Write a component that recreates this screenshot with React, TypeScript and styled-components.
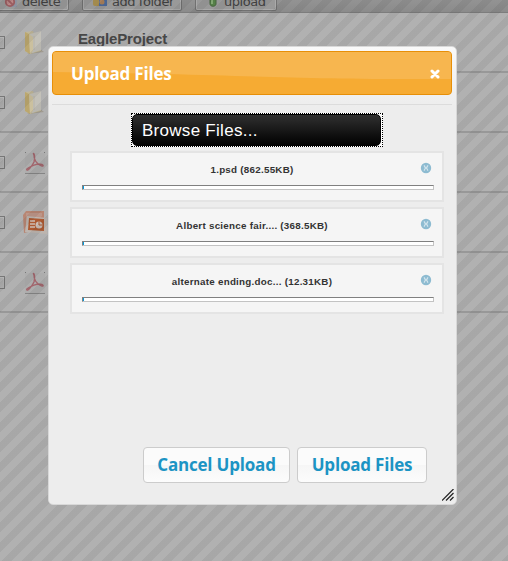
import React from "react";
import styled, { createGlobalStyle } from "styled-components";

const Global = createGlobalStyle`
  html, body { margin: 0; height: 100%; overflow: hidden; }
  * { box-sizing: border-box; }
  body { font-family: "Liberation Sans", Arial, sans-serif; background: #b0b0b0; }
  button { font: inherit; margin: 0; }
`;

const Page = styled.div`
  position: relative;
  width: 508px;
  height: 561px;
  overflow: hidden;
  background: #b1b1b1;
`;

const Toolbar = styled.div`
  display: flex;
  align-items: flex-start;
  gap: 13px;
  height: 13px;
  background: linear-gradient(#939393, #8b8b8b);
  border-bottom: 1px solid #7d7d7d;
`;

const ToolButton = styled.div<{ $width: number }>`
  display: flex;
  align-items: center;
  gap: 4px;
  flex: none;
  width: ${(p) => p.$width}px;
  height: 22px;
  margin-top: -11px;
  padding: 3px 0 0 10px;
  border: 1px solid #717171;
  border-radius: 2px;
  box-shadow: inset 0 0 0 1px #aaa;
  background: #999;
  color: #414141;
  font: 13px/17px "DejaVu Sans", Verdana, sans-serif;
  letter-spacing: -0.45px;
  white-space: nowrap;
  &:first-child { margin-left: -8px; padding-left: 11px; }
`;

const FileRow = styled.div`
  display: flex;
  align-items: center;
  height: 60px;
  border-bottom: 2px solid #989898;
`;

const Check = styled.span`
  flex: none;
  width: 13px;
  height: 13px;
  margin-left: -8px;
  border: 1px solid #777;
  background: linear-gradient(135deg, #999, #b5b5b5);
  box-shadow: inset 0 0 0 1px #b3b3b3;
`;

const FileIcon = styled.span`
  display: flex;
  justify-content: center;
  flex: none;
  margin: 2px 0 0 17px;
  width: 26px;
  svg { display: block; flex: none; }
`;

const FileTitle = styled.span`
  margin: -7px 0 0 30px;
  color: #484848;
  font-weight: bold;
  font-size: 15px;
  line-height: 18px;
  letter-spacing: -0.15px;
`;

const Overlay = styled.div`
  position: absolute;
  inset: 0;
  background: repeating-linear-gradient(
    135deg,
    transparent 0 1.77px,
    rgba(0, 0, 0, 0.055) 1.77px 8.84px,
    transparent 8.84px 14.142px
  );
`;

const Dialog = styled.section`
  position: absolute;
  left: 48px;
  top: 46px;
  width: 409px;
  height: 459px;
  padding: 4px 4px 0 3px;
  border: 1px solid #d8d8d8;
  border-radius: 5px;
  background: linear-gradient(#f9f9f9, #ededed 60px);
  display: flex;
  flex-direction: column;
`;

const TitleBar = styled.header`
  position: relative;
  display: flex;
  align-items: center;
  justify-content: space-between;
  flex: none;
  height: 44px;
  padding: 0 11px 0 18px;
  border: 1px solid #e78f08;
  border-radius: 4px;
  background: #f6ab33;
  overflow: hidden;
`;

const Gloss = styled.svg`
  position: absolute;
  left: 0;
  top: 0;
`;

const Title = styled.h1`
  position: relative;
  margin: 0;
  padding-top: 1px;
  color: #fff;
  font: 700 17px/22px "Open Sans", "Trebuchet MS", sans-serif;
  letter-spacing: -0.2px;
`;

const CloseIcon = styled.svg`
  position: relative;
  display: block;
  margin-top: 1px;
`;

const Content = styled.div`
  flex: 1;
  margin-top: 9px;
  border-top: 1px solid #dcdcdc;
  padding: 8px 9px 0 18px;
  display: flex;
  flex-direction: column;
`;

const BrowseFocus = styled.div`
  align-self: flex-start;
  flex: none;
  width: 252px;
  height: 34px;
  margin-left: 61px;
  border: 1px dotted #000;
  background: #fff;
`;

const Browse = styled.button`
  display: block;
  width: 249px;
  height: 32px;
  padding: 2px 0 0 9px;
  border: 1px solid #000;
  border-radius: 5px;
  background: linear-gradient(#303030, #000);
  color: #fff;
  font-size: 17px;
  line-height: 28px;
  letter-spacing: 0.28px;
  text-align: left;
`;

const Queue = styled.div`
  display: flex;
  flex-direction: column;
  gap: 5px;
  margin-top: 4px;
`;

const QueueItem = styled.div`
  flex: none;
  width: 374px;
  height: 51px;
  padding: 9px 10px 0 10px;
  border: 2px solid #e4e4e4;
  background: #f5f5f5;
`;

const ItemHead = styled.div`
  display: grid;
  grid-template-columns: 1fr 12px;
  height: 23px;
`;

const ItemName = styled.div`
  padding: 1px 0 0 2px;
  text-align: center;
  color: #333;
  font-weight: bold;
  font-size: 9.8px;
  line-height: 13px;
  letter-spacing: 0.26px;
`;

const Track = styled.div`
  width: 352px;
  height: 5px;
  border: 1px solid #c3c3c3;
  border-top-color: #808080;
  border-left-color: #808080;
  background: #fff;
`;

const Bar = styled.div`
  width: 1px;
  height: 3px;
  background: #0099dd;
`;

const Footer = styled.footer`
  display: flex;
  gap: 7px;
  padding: 0 0 0 91px;
  height: 57px;
`;

const Action = styled.button<{ $width: number }>`
  width: ${(p) => p.$width}px;
  height: 36px;
  padding: 0;
  border: 1px solid #ccc;
  border-radius: 4px;
  background: linear-gradient(#fbfbfb 0 50%, #f6f6f6 50%, #fcfcfc);
  color: #1c94c4;
  font: 700 17px/34px "Open Sans", "Trebuchet MS", sans-serif;
  letter-spacing: -0.2px;
  white-space: nowrap;
`;

const Grip = styled.svg`
  position: absolute;
  right: 2px;
  bottom: 3px;
`;

const FolderIcon = () => (
  <svg width="22" height="26" viewBox="0 0 22 26">
    <path d="M3 24 L20 22 L15 18 Z" fill="#999080" opacity=".7" />
    <path d="M1 2 L9 1 L10 4 L17 2 V21 L6 24 L1 21 Z" fill="#c0b797" />
    <path d="M6 4 L17 1 V20 L8 23 Z" fill="#c3c1b9" />
    <path d="M1 2 L5 4 L6 24 L1 21 Z" fill="#bba76e" />
    <path d="M5 4 L9 7 V21 L6 24 Z" fill="#cbc09e" />
    <path d="M10 6 V20" stroke="#b7b4aa" />
  </svg>
);

const PdfIcon = () => (
  <svg width="22" height="23" viewBox="1 0 22 23">
    <rect x="2" y="1" width="20" height="21" fill="#adadad" />
    <path d="M2 21.5H22" stroke="#858585" />
    <path d="M2 .5h1M21 .5h1" stroke="#777" />
    <path d="M11 3 C9 0 13 1 11 10 C9 14 5 19 4 18 C2 17 10 13 15 12 C22 12 21 16 17 13 C13 11 11 8 11 3" fill="none" stroke="#a2656c" strokeWidth="1.4" />
  </svg>
);

const SlidesIcon = () => (
  <svg width="25" height="26" viewBox="0 0 25 26">
    <path d="M3 1H21V18L1 23 0 5Z" fill="#b88673" />
    <path d="M3 3H19V6L3 20Z" fill="#bd9688" />
    <path d="M4 6 L24 8 V24 L2 22Z" fill="#bdb5af" />
    <path d="M6 8 L21 9 V21 L5 20Z" fill="#ad5a32" />
    <path d="M7 11h5M7 14h5M7 17h5" stroke="#cbbdb5" strokeWidth="1.5" />
    <circle cx="16" cy="15" r="3.5" fill="#cbbdb5" />
    <path d="M16 15V11.5M16 15h3.5" stroke="#ad5a32" />
  </svg>
);

const RemoveIcon = () => (
  <svg width="12" height="12" viewBox="0 0 12 12">
    <circle cx="6" cy="6" r="5.2" fill="#8dbbd1" />
    <path d="M4.3 3.2C4.3 5 5 5.2 6 6 7 6.8 7.7 7 7.7 8.8M7.7 3.2C7.7 5 7 5.2 6 6 5 6.8 4.3 7 4.3 8.8" fill="none" stroke="#cfe2eb" strokeWidth="1.3" />
  </svg>
);

const rows = [
  { icon: <FolderIcon />, title: "EagleProject" },
  { icon: <FolderIcon /> },
  { icon: <PdfIcon /> },
  { icon: <SlidesIcon /> },
  { icon: <PdfIcon /> },
];

const files = ["1.psd (862.55KB)", "Albert science fair.... (368.5KB)", "alternate ending.doc... (12.31KB)"];

export default function App() {
  return (
    <Page>
      <Global />
      <Toolbar>
        <ToolButton $width={77}>
          <svg width="14" height="14" viewBox="0 0 14 14">
            <path d="M5 4h8v8H7Z" fill="#8d93a0" />
            <circle cx="6" cy="7" r="4.2" fill="#b88" stroke="#9a5c60" strokeWidth="1.8" />
            <path d="M3 4l6 6" stroke="#9a5c60" strokeWidth="1.8" />
          </svg>
          delete
        </ToolButton>
        <ToolButton $width={100}>
          <svg width="15" height="14" viewBox="0 0 15 14">
            <rect y="4" width="9" height="7" rx="2" fill="#a28a4e" />
            <path d="M6 3h8v8H6Z" fill="#4d6b9b" />
            <circle cx="9" cy="7" r="2.5" fill="#a9805a" />
          </svg>
          add folder
        </ToolButton>
        <ToolButton $width={82}>
          <svg width="14" height="14" viewBox="0 0 14 14">
            <path d="M4 1h6v8c0 3-6 3-6 0Z" fill="#558048" stroke="#47653f" />
            <path d="M6 2v7" stroke="#81a773" strokeWidth="2" />
          </svg>
          upload
        </ToolButton>
      </Toolbar>
      {rows.map((r, i) => (
        <FileRow key={i}>
          <Check />
          <FileIcon>{r.icon}</FileIcon>
          {r.title && <FileTitle>{r.title}</FileTitle>}
        </FileRow>
      ))}
      <Overlay />
      <Dialog>
        <TitleBar>
          <Gloss width="400" height="42" viewBox="0 0 400 42" preserveAspectRatio="none">
            <path d="M0 0H400V27C240 28 180 22 0 20Z" fill="#f7b64f" />
          </Gloss>
          <Title>Upload Files</Title>
          <CloseIcon width="10" height="10" viewBox="0 0 10 10">
            <path d="M2 2L8 8M8 2L2 8" stroke="#fff" strokeWidth="3" strokeLinecap="round" />
          </CloseIcon>
        </TitleBar>
        <Content>
          <BrowseFocus>
            <Browse>Browse Files...</Browse>
          </BrowseFocus>
          <Queue>
            {files.map((f) => (
              <QueueItem key={f}>
                <ItemHead>
                  <ItemName>{f}</ItemName>
                  <RemoveIcon />
                </ItemHead>
                <Track>
                  <Bar />
                </Track>
              </QueueItem>
            ))}
          </Queue>
        </Content>
        <Footer>
          <Action $width={147}>Cancel Upload</Action>
          <Action $width={130}>Upload Files</Action>
        </Footer>
        <Grip width="12" height="12" viewBox="0 0 12 12">
          <path d="M0 11.5L11.5 0M4 11.5L11.5 4M8 11.5L11.5 8" stroke="#222" strokeWidth="1.2" />
        </Grip>
      </Dialog>
    </Page>
  );
}
